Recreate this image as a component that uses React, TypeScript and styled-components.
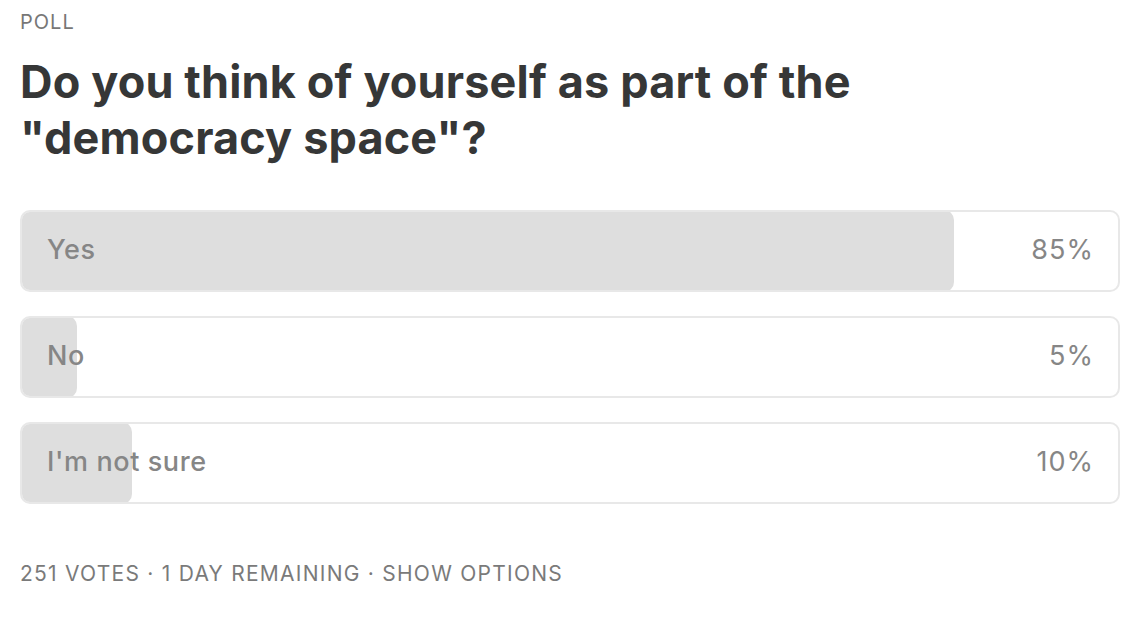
import React from "react";
import styled, { createGlobalStyle } from "styled-components";

const Global = createGlobalStyle`
  html, body { margin: 0; padding: 0; background: #ffffff; }
  body { font-family: Inter, "Noto Sans", sans-serif; -webkit-font-smoothing: antialiased; }
`;

const Poll = styled.div`
  padding: 10px 22px 0 20px;
  display: flex;
  flex-direction: column;
`;

const Kicker = styled.div`
  font-size: 20px;
  line-height: 24px;
  letter-spacing: 1px;
  color: #777777;
  text-transform: uppercase;
`;

const Question = styled.h1`
  margin: 20px 0 0 0;
  font-size: 45px;
  line-height: 56px;
  font-weight: 700;
  color: #363737;
  letter-spacing: 0.15px;
`;

const Options = styled.div`
  margin-top: 44px;
  display: flex;
  flex-direction: column;
  gap: 24px;
`;

const Option = styled.div`
  position: relative;
  height: 82px;
  box-sizing: border-box;
  border: 2px solid #e8e8e8;
  border-radius: 10px;
  overflow: hidden;
  display: flex;
  align-items: center;
  justify-content: space-between;
  padding: 0 24px 3px 25px;
`;

const Fill = styled.div`
  position: absolute;
  left: -2px;
  top: -2px;
  bottom: -2px;
  background: #dedede;
  border-radius: 10px;
`;

const Label = styled.span`
  position: relative;
  font-size: 27px;
  font-weight: 500;
  letter-spacing: 0.6px;
  color: #868686;
`;

const Percent = styled.span`
  position: relative;
  font-size: 27px;
  font-weight: 400;
  letter-spacing: 1px;
  color: #868686;
`;

const Footer = styled.div`
  margin-top: 57px;
  font-size: 21px;
  letter-spacing: 1.25px;
  color: #7a7a7a;
  text-transform: uppercase;
`;

const data = [
  { label: "Yes", pct: 85 },
  { label: "No", pct: 5 },
  { label: "I'm not sure", pct: 10 },
];

export default function App() {
  return (
    <>
      <Global />
      <Poll>
        <Kicker>Poll</Kicker>
        <Question>
          Do you think of yourself as part of the
          <br />
          "democracy space"?
        </Question>
        <Options>
          {data.map((d) => (
            <Option key={d.label}>
              <Fill style={{ width: `calc(${d.pct}% + 2px)` }} />
              <Label>{d.label}</Label>
              <Percent>{d.pct}%</Percent>
            </Option>
          ))}
        </Options>
        <Footer>251 votes · 1 day remaining · show options</Footer>
      </Poll>
    </>
  );
}
